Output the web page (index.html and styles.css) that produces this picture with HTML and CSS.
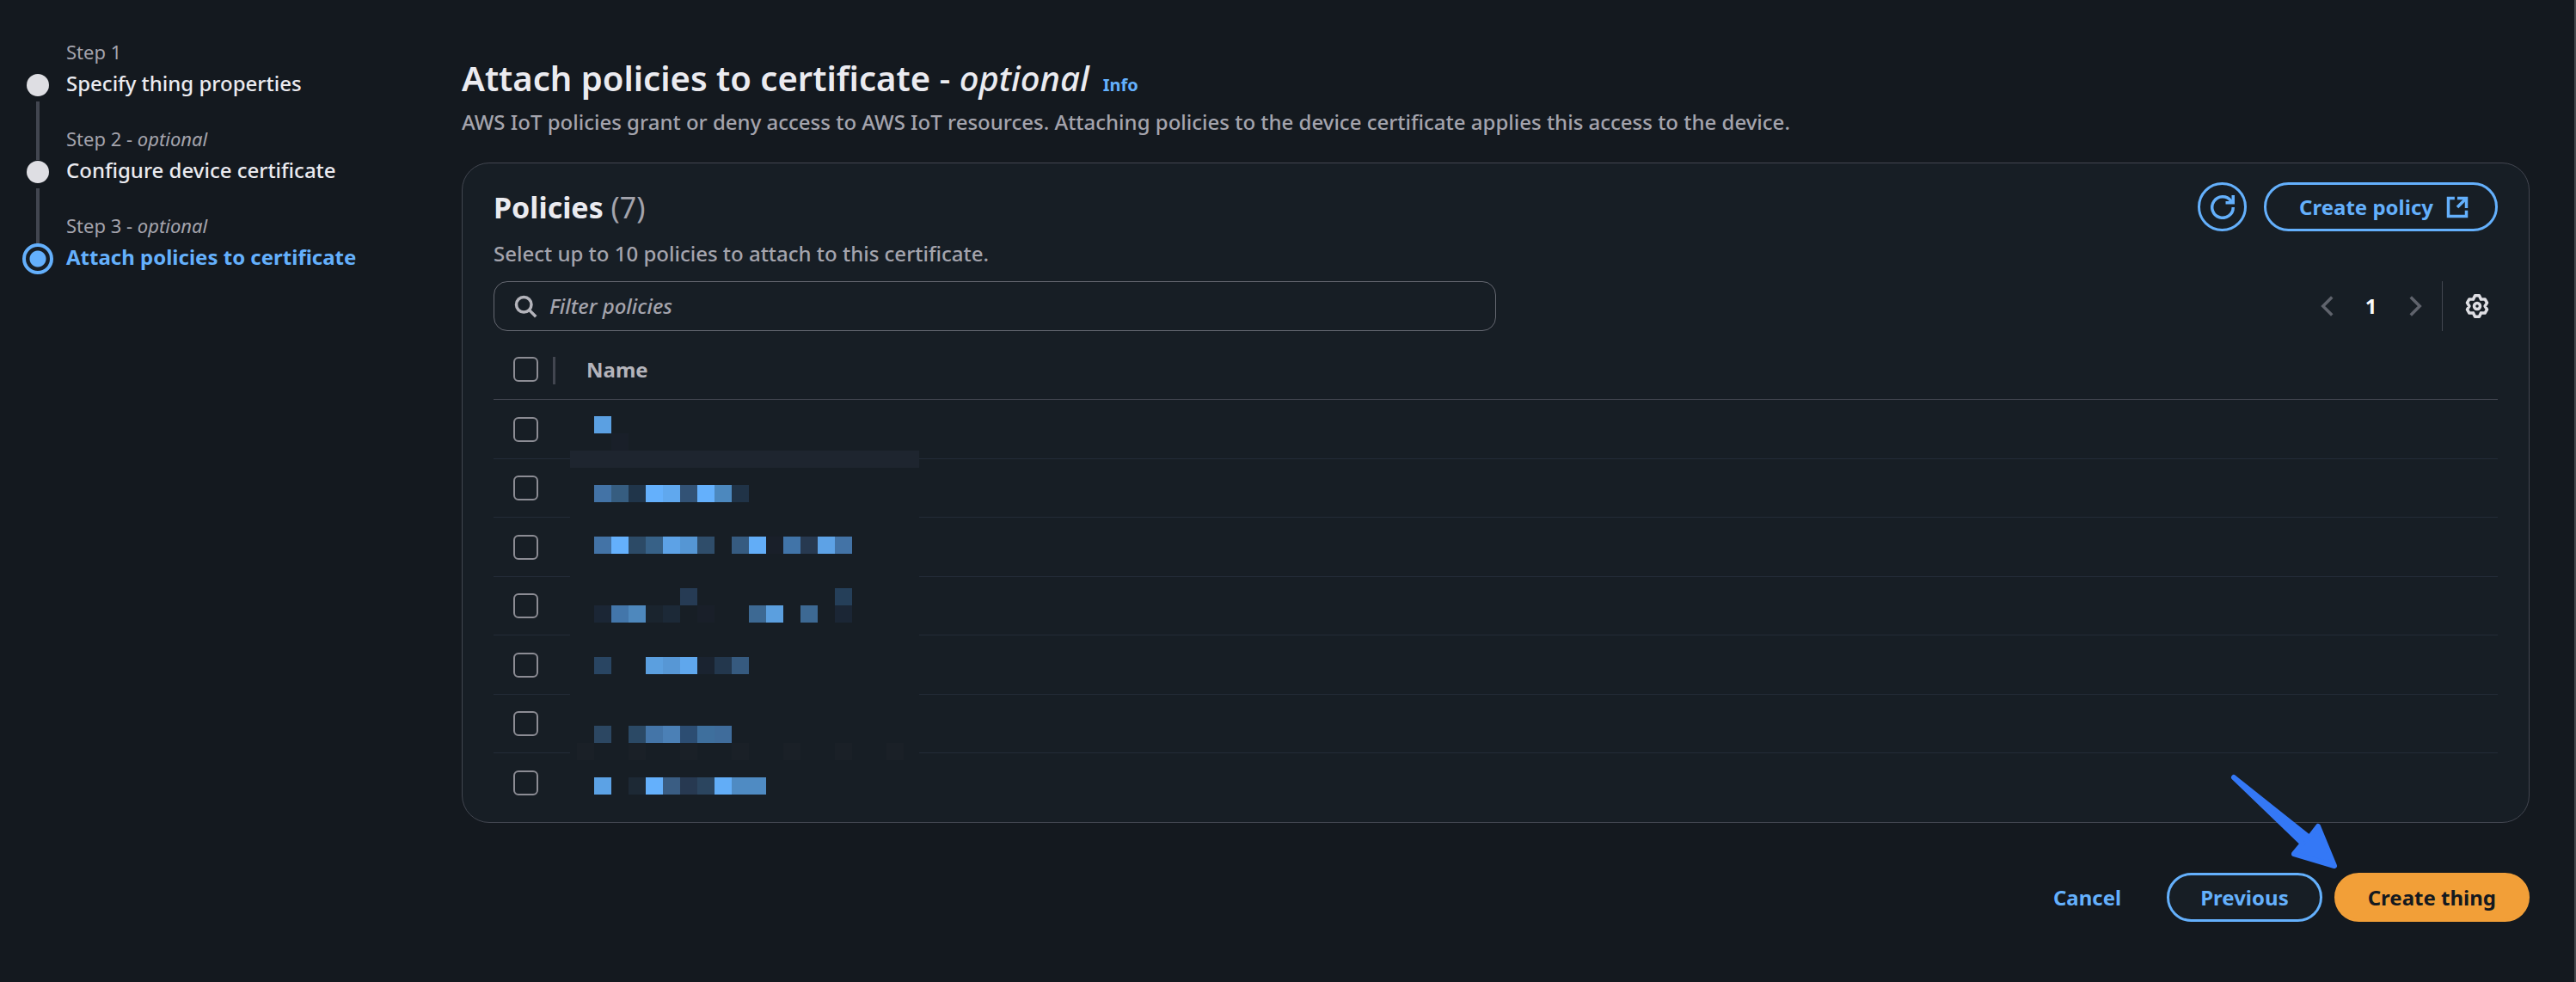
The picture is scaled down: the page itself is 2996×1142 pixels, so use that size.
FILE: index.html
```html
<!DOCTYPE html>
<html lang="en">
<head>
<meta charset="utf-8">
<meta name="viewport" content="width=device-width, initial-scale=1">
<title>Attach policies to certificate</title>
<link rel="stylesheet" href="styles.css">
</head>
<body>
<div class="page">
  <nav class="steps" aria-label="Steps">
    <ol class="step-list">
      <li class="step">
        <span class="step-label">Step 1</span>
        <span class="marker"></span>
        <a class="step-name" href="#step-1">Specify thing properties</a>
        <span class="connector"></span>
      </li>
      <li class="step">
        <span class="step-label">Step 2 - <i>optional</i></span>
        <span class="marker"></span>
        <a class="step-name" href="#step-2">Configure device certificate</a>
        <span class="connector"></span>
      </li>
      <li class="step">
        <span class="step-label">Step 3 - <i>optional</i></span>
        <span class="marker marker-current"></span>
        <span class="step-name step-current" aria-current="step">Attach policies to certificate</span>
      </li>
    </ol>
  </nav>

  <main class="content">
    <header class="page-header">
      <h1 class="title">Attach policies to certificate <span class="title-optional">- <i>optional</i></span></h1>
      <a class="info" href="#info">Info</a>
    </header>
    <p class="description">AWS IoT policies grant or deny access to AWS IoT resources. Attaching policies to the device certificate applies this access to the device.</p>

    <section class="card">
      <div class="card-header">
        <h2 class="card-title">Policies <span class="count">(7)</span></h2>
        <div class="card-actions">
          <button class="button button-round" type="button" aria-label="Refresh">
            <svg class="icon" viewBox="0 0 16 16"><path d="M10 5h5V0"/><path d="M15 8a7 7 0 1 1-1.500-4.300L15 5"/></svg>
          </button>
          <button class="button button-external" type="button">Create policy
            <svg class="icon" viewBox="0 0 16 16"><path d="M14 8.500V2H8"/><path d="M6.200 2H2v12h12v-3.800"/><path d="M14 2 8 8"/></svg>
          </button>
        </div>
      </div>
      <p class="card-text">Select up to 10 policies to attach to this certificate.</p>

      <div class="tools">
        <label class="filter">
          <svg class="icon" viewBox="0 0 16 16"><circle cx="7" cy="7" r="5"/><path d="m15 15-4.500-4.500"/></svg>
          <input class="filter-input" type="search" placeholder="Filter policies" aria-label="Filter policies">
        </label>
        <div class="pagination">
          <button class="page-button" type="button" aria-label="Previous page" disabled><svg class="icon" viewBox="0 0 16 16"><path d="m11 2-6 6 6 6"/></svg></button>
          <button class="page-button page-current" type="button">1</button>
          <button class="page-button" type="button" aria-label="Next page" disabled><svg class="icon" viewBox="0 0 16 16"><path d="m5 2 6 6-6 6"/></svg></button>
          <button class="page-button settings" type="button" aria-label="Preferences"><svg class="icon icon-gear" viewBox="0 0 16 16"><path d="M6.600 1h2.800l1.200 2.500 2.600-.1 1.400 2.400L13.200 8l1.400 2.200-1.400 2.400-2.600-.1L9.400 15H6.600l-1.200-2.500-2.600.1-1.400-2.400L2.800 8 1.400 5.800l1.400-2.400 2.600.1z"/><circle cx="8" cy="8" r="2"/></svg></button>
        </div>
      </div>

      <div class="table-area">
        <table class="policies">
          <thead>
            <tr><th class="select-cell"><input class="check" type="checkbox" aria-label="Select all"></th><th class="name-cell" scope="col">Name</th></tr>
          </thead>
          <tbody>
            <tr><td class="select-cell"><input class="check" type="checkbox" aria-label="Select policy 1"></td><td></td></tr>
            <tr><td class="select-cell"><input class="check" type="checkbox" aria-label="Select policy 2"></td><td></td></tr>
            <tr><td class="select-cell"><input class="check" type="checkbox" aria-label="Select policy 3"></td><td></td></tr>
            <tr><td class="select-cell"><input class="check" type="checkbox" aria-label="Select policy 4"></td><td></td></tr>
            <tr><td class="select-cell"><input class="check" type="checkbox" aria-label="Select policy 5"></td><td></td></tr>
            <tr><td class="select-cell"><input class="check" type="checkbox" aria-label="Select policy 6"></td><td></td></tr>
            <tr><td class="select-cell"><input class="check" type="checkbox" aria-label="Select policy 7"></td><td></td></tr>
          </tbody>
        </table>
        <!-- Pixelated cover that hides the policy names -->
        <svg class="redaction" viewBox="0 1 406 459" aria-hidden="true" shape-rendering="crispEdges">
          <rect width="406" height="460" fill="#171e25"/>
          <rect y="60" width="406" height="20" fill="#1e252f"/>
          <g transform="translate(28 20)">
            <path fill="#5ba0e2" d="M0 0h20v20H0z"/><path fill="#191f29" d="M20 20h20v20H20z"/>
          </g>
          <g transform="translate(28 100)">
            <path fill="#4373a6" d="M0 0h20v20H0z"/><path fill="#365d80" d="M20 0h20v20H20z"/><path fill="#20354a" d="M40 0h20v20H40z"/><path fill="#64b0fc" d="M60 0h20v20H60z"/><path fill="#60a8ee" d="M80 0h20v20H80z"/><path fill="#325275" d="M100 0h20v20h-20z"/><path fill="#64b0fc" d="M120 0h20v20h-20z"/><path fill="#4c88be" d="M140 0h20v20h-20z"/><path fill="#203347" d="M160 0h20v20h-20z"/>
          </g>
          <g transform="translate(28 160)">
            <path fill="#4373a6" d="M0 0h20v20H0z"/><path fill="#64b0fc" d="M20 0h20v20H20z"/><path fill="#2c4a66" d="M40 0h20v20H40z"/><path fill="#376187" d="M60 0h20v20H60z"/><path fill="#5da2e6" d="M80 0h20v20H80z"/><path fill="#5596d4" d="M100 0h20v20h-20z"/><path fill="#2f4d6a" d="M120 0h20v20h-20z"/><path fill="#365b80" d="M160 0h20v20h-20z"/><path fill="#62adf7" d="M180 0h20v20h-20z"/><path fill="#191f29" d="M200 0h20v20h-20z"/><path fill="#4174a8" d="M220 0h20v20h-20z"/><path fill="#273950" d="M240 0h20v20h-20z"/><path fill="#5da2e6" d="M260 0h20v20h-20z"/><path fill="#4373a6" d="M280 0h20v20h-20z"/>
          </g>
          <g transform="translate(28 220)">
            <path fill="#263b54" d="M100 0h20v20h-20z"/><path fill="#253f59" d="M280 0h20v20h-20z"/><path fill="#1b2635" d="M0 20h20v20H0z"/><path fill="#4376aa" d="M20 20h20v20H20z"/><path fill="#4e88bd" d="M40 20h20v20H40z"/><path fill="#1a242e" d="M60 20h20v20H60z"/><path fill="#1c2937" d="M80 20h20v20H80z"/><path fill="#191f29" d="M120 20h20v20h-20z"/><path fill="#3d6993" d="M180 20h20v20h-20z"/><path fill="#5b9fdf" d="M200 20h20v20h-20z"/><path fill="#3d6993" d="M240 20h20v20h-20z"/><path fill="#1b2635" d="M280 20h20v20h-20z"/>
          </g>
          <g transform="translate(28 300)">
            <path fill="#294562" d="M0 0h20v20H0z"/><path fill="#5b9fdf" d="M60 0h20v20H60z"/><path fill="#5797d5" d="M80 0h20v20H80z"/><path fill="#5fa7ed" d="M100 0h20v20h-20z"/><path fill="#1a2330" d="M120 0h20v20h-20z"/><path fill="#23374d" d="M140 0h20v20h-20z"/><path fill="#365a7f" d="M160 0h20v20h-20z"/>
          </g>
          <g transform="translate(28 380)">
            <path fill="#2c4762" d="M0 0h20v20H0z"/><path fill="#2b4965" d="M40 0h20v20H40z"/><path fill="#4475a8" d="M60 0h20v20H60z"/><path fill="#4b80b6" d="M80 0h20v20H80z"/><path fill="#2c4d72" d="M100 0h20v20h-20z"/><path fill="#3e6f9d" d="M120 0h20v20h-20z"/><path fill="#3f6c9b" d="M140 0h20v20h-20z"/>
            <path fill="#1a2027" d="M-20 20H0v20h-20zM40 20h20v20H40zM100 20h20v20h-20zM160 20h20v20h-20zM220 20h20v20h-20zM280 20h20v20h-20zM340 20h20v20h-20z"/>
          </g>
          <g transform="translate(28 440)">
            <path fill="#5ca2e5" d="M0 0h20v20H0z"/><path fill="#1d2935" d="M40 0h20v20H40z"/><path fill="#64b0fc" d="M60 0h20v20H60z"/><path fill="#3a5d83" d="M80 0h20v20H80z"/><path fill="#273951" d="M100 0h20v20h-20z"/><path fill="#2b455f" d="M120 0h20v20h-20z"/><path fill="#62adf7" d="M140 0h20v20h-20z"/><path fill="#4f8bc3" d="M160 0h40v20h-40z"/>
          </g>
        </svg>
      </div>
    </section>

    <footer class="actions">
      <button class="button button-link" type="button">Cancel</button>
      <button class="button" type="button">Previous</button>
      <button class="button button-primary" type="button">Create thing</button>
      <svg class="arrow" viewBox="0 0 124 110" aria-hidden="true"><path d="M3 3 91 73 101 60 120 106 73 92 83 80z"/></svg>
    </footer>
  </main>
</div>
</body>
</html>
```
FILE: styles.css
```css
:root {
  --page: #14191f;
  --card: #171e25;
  --line: #424650;
  --row-line: #232b37;
  --muted: #a4a4ad;
  --text: #ebebf0;
  --blue: #64b0fc;
}

* { box-sizing: border-box; }

body {
  margin: 0;
  min-height: 100vh;
  background: var(--page);
  color: var(--text);
  font-family: "Noto Sans", "Open Sans", sans-serif;
  font-size: 24px;
  font-weight: 500;
  line-height: 40px;
}

h1, h2, p, ol { margin: 0; padding: 0; }
a { color: inherit; text-decoration: none; }
button, input { font: inherit; color: inherit; }

.page {
  display: grid;
  grid-template-columns: 513px 1fr;
  min-height: 100vh;
  padding: 40px 52px 56px 24px;
  border-right: 2px solid #45484d;
}

.step-list { list-style: none; }

.step {
  display: grid;
  grid-template-columns: 40px 1fr;
  grid-template-rows: 40px 38px 23px;
  column-gap: 13px;
  justify-items: start;
}

.step-label {
  grid-column: 2;
  color: var(--muted);
  font-size: 22px;
  font-weight: 400;
}

.marker {
  grid-column: 1;
  justify-self: center;
  align-self: center;
  width: 26px;
  height: 26px;
  border-radius: 50%;
  background: #dedee3;
}

.marker-current {
  width: 36px;
  height: 36px;
  border: 4px solid var(--blue);
  background: radial-gradient(circle, var(--blue) 9px, var(--card) 10px);
}

.step-name {
  grid-column: 2;
  line-height: 34px;
}

.step-current { color: var(--blue); font-weight: 700; }

.connector {
  grid-column: 1;
  grid-row: 3;
  justify-self: center;
  width: 4px;
  height: 68px;
  background: var(--line);
}

.page-header {
  display: flex;
  align-items: baseline;
  gap: 16px;
  padding-top: 26px;
}

.title { font-size: 40px; font-weight: 600; line-height: 50px; }
.title-optional { font-weight: 500; }
.info { color: var(--blue); font-size: 20px; font-weight: 700; line-height: 24px; }
.description { margin-top: 6px; color: var(--muted); }

.card {
  margin-top: 27px;
  padding: 22px 36px 11px;
  border: 1px solid var(--line);
  border-radius: 32px;
  background: var(--card);
}

.card-header,
.card-actions,
.tools,
.pagination,
.actions { display: flex; align-items: center; }

.card-header { justify-content: space-between; }
.card-title { font-size: 34px; font-weight: 700; line-height: 56px; }
.count { color: var(--muted); font-weight: 400; }
.card-actions { gap: 20px; }
.card-text { color: var(--muted); margin-top: 6px; }

.icon {
  width: 28px;
  height: 28px;
  fill: none;
  stroke: currentColor;
  stroke-width: 2;
}

.icon-gear { stroke-linejoin: round; }

.button {
  display: flex;
  align-items: center;
  justify-content: center;
  gap: 14px;
  height: 57px;
  padding: 0 36px;
  border: 3px solid var(--blue);
  border-radius: 29px;
  background: var(--card);
  color: var(--blue);
  font-weight: 700;
}

.button-round { width: 57px; padding: 0; }
.button-external { padding: 0 30px 0 38px; }
.button-link { border-color: transparent; background: none; }
.button-primary { border-color: #f29f38; background: #f29f38; color: #14191f; }

.tools { justify-content: space-between; margin-top: 12px; }

.filter {
  display: flex;
  align-items: center;
  gap: 14px;
  width: 50%;
  height: 58px;
  padding: 0 22px;
  border: 1px solid #656871;
  border-radius: 16px;
  color: #b4b4bb;
}

.filter-input {
  flex: 1;
  min-width: 0;
  padding: 0;
  border: 0;
  outline: 0;
  background: none;
}

.filter-input::placeholder { color: var(--muted); font-style: italic; opacity: 1; }

.page-button {
  display: flex;
  align-items: center;
  justify-content: center;
  width: 51px;
  height: 58px;
  padding: 0;
  border: 0;
  background: none;
  color: #5f636c;
}

.page-current { color: #fafafc; font-weight: 700; }

.settings {
  width: 65px;
  margin-left: 6px;
  padding-left: 16px;
  border-left: 1px solid var(--line);
  color: #dedee3;
}

.table-area { position: relative; margin-top: 8px; }

.policies { width: 100%; border-spacing: 0; table-layout: fixed; }
.policies th, .policies td { height: 69px; padding: 0; text-align: left; }
.policies th { height: 72px; padding-top: 2px; border-bottom: 1px solid var(--line); color: #b4b4bb; }
.policies td { border-bottom: 1px solid var(--row-line); }
.policies tbody tr:nth-child(even) td { height: 68px; }
.policies tbody tr:last-child td { border-bottom: 0; }
.policies .select-cell { width: 108px; padding-left: 23px; }
.policies thead .select-cell {
  background: linear-gradient(var(--line), var(--line)) 69px 22px / 3px 32px no-repeat;
}

.check {
  display: block;
  appearance: none;
  width: 29px;
  height: 29px;
  margin: 0;
  border: 2px solid #8c8c94;
  border-radius: 6px;
}

.redaction {
  position: absolute;
  left: 89px;
  top: 72px;
  width: 406px;
  height: 459px;
}

.actions { position: relative; justify-content: flex-end; gap: 14px; margin-top: 58px; }

.arrow {
  position: absolute;
  right: 223px;
  bottom: 61px;
  width: 124px;
  height: 110px;
  fill: #3478f6;
  stroke: #3478f6;
  stroke-width: 6;
  stroke-linejoin: round;
  overflow: visible;
}
```
